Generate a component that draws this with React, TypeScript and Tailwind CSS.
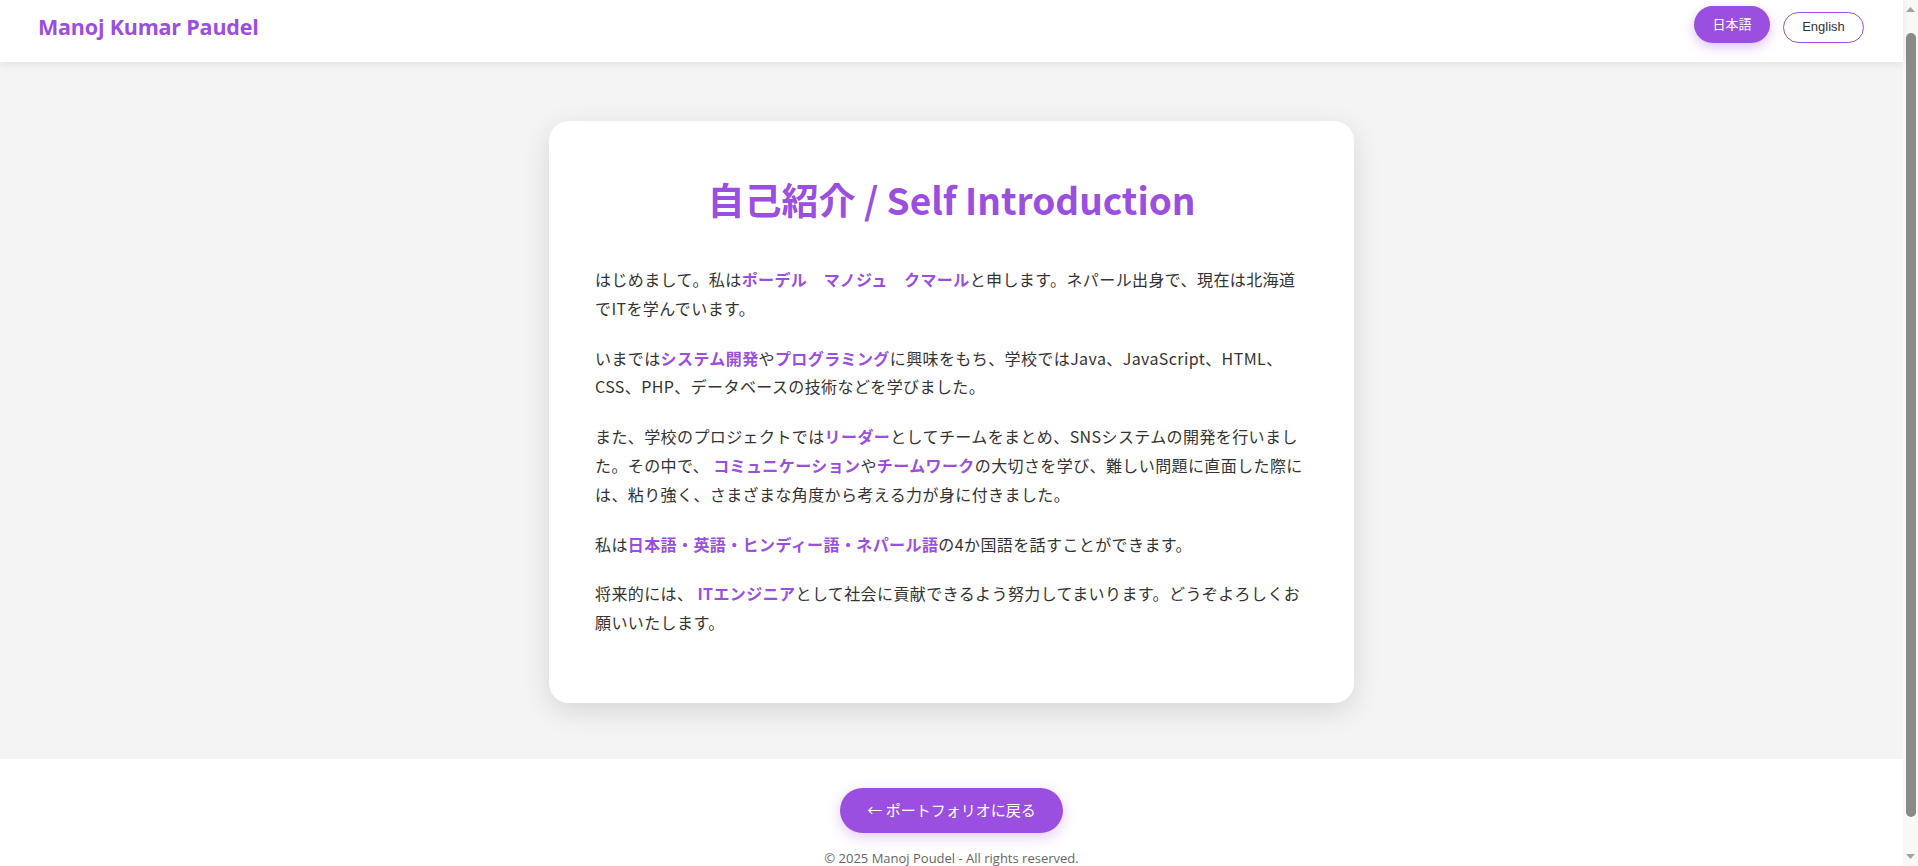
const jp = "font-['Segoe_UI','Noto_Sans_CJK_JP',sans-serif]";

// highlighted words inside the paragraphs
const Hl = ({ children }: { children: React.ReactNode }) => (
  <strong className="font-bold text-[#9b4fe0]">{children}</strong>
);

// classic browser scrollbar drawn at the right edge
const ScrollBar = () => (
  <div className="w-[15px] shrink-0 bg-[#f8f8f8] flex flex-col items-center py-[4px]">
    <svg width="11" height="10" viewBox="0 0 11 10">
      <path d="M1 8 L5.5 3 L10 8 Z" fill="#a3a3a3" />
    </svg>
    <div className="w-[10px] flex-1 mt-[19px] mb-[35px] rounded-full bg-[#8a8a8a]" />
    <svg width="11" height="10" viewBox="0 0 11 10">
      <path d="M1 2 L5.5 7 L10 2 Z" fill="#a3a3a3" />
    </svg>
  </div>
);

export default function App() {
  return (
    <div className="h-[866px] flex overflow-hidden bg-white">
      <div className={`flex-1 flex flex-col text-[#333] ${jp}`}>
        <header className="h-[62px] shrink-0 bg-white flex items-center justify-between pl-[38px] pr-[39px] shadow-[0_2px_8px_rgba(0,0,0,0.08)] relative z-10">
          <div className="text-[21.5px] font-bold text-[#9b4fe0] font-['Open_Sans','Noto_Sans_CJK_JP',sans-serif] tracking-[-0.2px] -mt-[8px]">
            Manoj Kumar Paudel
          </div>
          <div className="flex items-center gap-[13px] -mt-[8px]">
            <button className="h-[37px] w-[76px] rounded-full bg-[#9b4fe0] text-white text-[13px] shadow-[0_4px_12px_rgba(155,79,224,0.35)] -mt-[6px]">
              日本語
            </button>
            <button className="h-[31px] w-[81px] rounded-full border border-[#9b4fe0] bg-white text-[#333] text-[13px] font-['Liberation_Sans',sans-serif]">
              English
            </button>
          </div>
        </header>

        <main className="bg-[#f4f4f4] pt-[59px] pb-[56px] flex justify-center shrink-0">
          <section className="w-[805px] bg-white rounded-[20px] shadow-[0_8px_28px_rgba(0,0,0,0.12)] px-[46px] pt-[56px] pb-[45px]">
            <h1 className="text-center text-[37px] leading-[44px] font-bold text-[#9b4fe0] mb-[44px]">
              自己紹介 / Self Introduction
            </h1>
            <div className="text-[16px] leading-[28.8px] tracking-[0.4px] text-[#333]">
              <p className="mb-[21px]">
                はじめまして。私は<Hl>ポーデル　マノジュ　クマール</Hl>と申します。ネパール出身で、現在は北海道でITを学んでいます。
              </p>
              <p className="mb-[21px]">
                いまでは<Hl>システム開発</Hl>や<Hl>プログラミング</Hl>に興味をもち、学校ではJava、JavaScript、HTML、CSS、PHP、データベースの技術などを学びました。
              </p>
              <p className="mb-[21px]">
                また、学校のプロジェクトでは<Hl>リーダー</Hl>としてチームをまとめ、SNSシステムの開発を行いました。その中で、{" "}
                <Hl>コミュニケーション</Hl>や<Hl>チームワーク</Hl>の大切さを学び、難しい問題に直面した際には、粘り強く、さまざまな角度から考える力が身に付きました。
              </p>
              <p className="mb-[21px]">
                私は<Hl>日本語・英語・ヒンディー語・ネパール語</Hl>の4か国語を話すことができます。
              </p>
              <p className="mb-[21px]">
                将来的には、 <Hl>ITエンジニア</Hl>として社会に貢献できるよう努力してまいります。どうぞよろしくお願いいたします。
              </p>
            </div>
          </section>
        </main>

        <footer className="bg-white flex flex-col items-center pt-[29px] pb-[40px]">
          <a
            href="#"
            className="h-[45px] px-[27px] rounded-full bg-[#9b4fe0] text-white text-[15px] flex items-center shadow-[0_4px_14px_rgba(155,79,224,0.3)]"
          >
            ← ポートフォリオに戻る
          </a>
          <p className="mt-[16px] text-[13px] text-[#666] font-['Open_Sans',sans-serif]">
            © 2025 Manoj Poudel - All rights reserved.
          </p>
        </footer>
      </div>
      <ScrollBar />
    </div>
  );
}
